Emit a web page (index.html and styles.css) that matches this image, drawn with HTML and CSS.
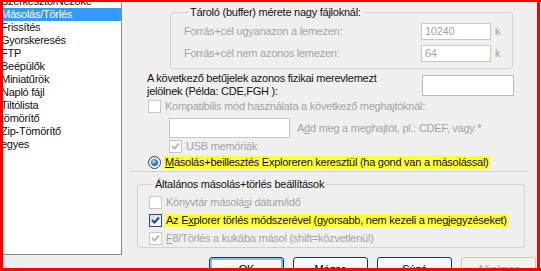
FILE: index.html
```html
<!DOCTYPE html>
<html>
<head>
<meta charset="utf-8">
<link rel="stylesheet" href="styles.css">
</head>
<body>
<div class="frame">
  <div class="list">
    <ul class="items">
      <li>Szerkesztő/Nézőke</li>
      <li class="sel">Másolás/Törlés</li>
      <li>Frissítés</li>
      <li>Gyorskeresés</li>
      <li>FTP</li>
      <li>Beépülők</li>
      <li>Miniatűrök</li>
      <li>Napló fájl</li>
      <li>Tiltólista</li>
      <li>tömörítő</li>
      <li>Zip-Tömörítő</li>
      <li>egyes</li>
    </ul>
  </div>
  <div class="page">
    <fieldset class="grp buf">
      <legend>Tároló (buffer) mérete nagy fájloknál:</legend>
      <div class="bgrid">
        <span class="dis">Forrás+cél ugyanazon a lemezen:</span>
        <span class="inp dis">10240</span>
        <span class="dis unit">k</span>
        <span class="dis">Forrás+cél nem azonos lemezen:</span>
        <span class="inp dis">64</span>
        <span class="dis unit">k</span>
      </div>
    </fieldset>
    <div class="drives">
      <div class="dtext">A következő betűjelek azonos fizikai merevlemezt<br>jelölnek (Példa: CDE,FGH ):</div>
      <div class="inp wide"></div>
    </div>
    <div class="opt compat dis">
      <span class="cb dis"></span>
      <span class="lbl">Kompatibilis mód használata a következő meghajtóknál:</span>
    </div>
    <div class="addrow">
      <span class="inp mid"></span>
      <span class="dis">A<u>d</u>d meg a meghajtót, pl.: CDEF, vagy *</span>
    </div>
    <div class="opt usb dis">
      <span class="cb dis"><svg viewBox="0 0 11 11" width="11" height="11"><polyline points="2,5 4.5,7.5 9,2.5" fill="none" stroke="#b9b9b9" stroke-width="2"/></svg></span>
      <span class="lbl">USB memóriák</span>
    </div>
    <div class="opt radio">
      <span class="rb"><span class="dot"></span></span>
      <span class="lbl hl"><u>M</u>ásolás+beillesztés Exploreren keresztül (ha gond van a másolással)</span>
    </div>
    <div class="sep"></div>
    <fieldset class="grp gen">
      <legend>Általános másolás+törlés beállítások</legend>
      <div class="opt dis">
        <span class="cb dis"></span>
        <span class="lbl">Könyvtár másolá<u>s</u>i dátum/idő</span>
      </div>
      <div class="opt">
        <span class="cb"><svg viewBox="0 0 11 11" width="11" height="11"><polyline points="2,5 4.5,7.5 9,2.5" fill="none" stroke="#2b3f9c" stroke-width="2"/></svg></span>
        <span class="lbl hl">Az E<u>x</u>plorer törlés módszerével (gyorsabb, nem kezeli a megjegyzéseket)</span>
      </div>
      <div class="opt dis">
        <span class="cb dis"><svg viewBox="0 0 11 11" width="11" height="11"><polyline points="2,5 4.5,7.5 9,2.5" fill="none" stroke="#b9b9b9" stroke-width="2"/></svg></span>
        <span class="lbl"><u>F</u>8/Törlés a kukába másol (shift=közvetlenül)</span>
      </div>
    </fieldset>
    <div class="buttons">
      <button class="btn def">OK</button>
      <button class="btn">Mégse</button>
      <button class="btn">Súgó</button>
      <button class="btn dis">Alkalmaz</button>
    </div>
  </div>
</div>
<div class="red red-top"></div>
<div class="red red-left"></div>
<div class="red red-right"></div>
<div class="red red-bottom"></div>
</body>
</html>
```
FILE: styles.css
```css
* { box-sizing: border-box; }
html, body { margin: 0; padding: 0; }
body {
  width: 541px;
  height: 271px;
  overflow: hidden;
  position: relative;
  background: #efefef;
  color: #111;
  font: 11px/13px "Liberation Sans", Arial, sans-serif;
  letter-spacing: -0.25px;
}
.frame { display: flex; height: 271px; }

.list {
  flex: none;
  width: 122px;
  height: 255px;
  background: #fff;
  border-right: 1px solid #8c8c8c;
  border-bottom: 1px solid #8c8c8c;
  overflow: hidden;
}
.items { list-style: none; margin: -5px 0 0; padding: 0; }
.items li { height: 13px; padding-left: 1px; white-space: nowrap; }
.items li.sel { background: #3399ff; color: #fff; }

.page { flex: 1; display: flex; flex-direction: column; min-width: 0; }
.page > * { flex: none; }

.grp {
  margin: 0;
  padding: 0;
  min-width: 0;
  border: 1px solid #d3d3cb;
  border-radius: 3px;
}
.grp legend { padding: 0 2px; margin-left: 4px; line-height: 13px; }

.buf { margin: 6px 0 0 48px; width: 343px; height: 63px; padding: 4px 0 0 13px; }
.bgrid {
  display: grid;
  grid-template-columns: 237px 70px auto;
  grid-auto-rows: 17px;
  row-gap: 5px;
  align-items: center;
}
.unit { margin-left: 4px; }
.dis { color: #a3a3a3; }

.inp {
  display: block;
  background: #fff;
  border: 1px solid #c8c8c0;
  height: 17px;
  line-height: 15px;
  padding: 0 3px;
}
.inp.wide { width: 92px; height: 21px; margin-top: 3px; border-color: #b8b8b8; }
.inp.mid { width: 121px; height: 20px; }

.drives { display: flex; justify-content: space-between; margin: 3px 0 0 25px; width: 367px; }

.opt { display: flex; align-items: center; height: 13px; white-space: nowrap; }
.cb {
  flex: none;
  width: 13px;
  height: 13px;
  border: 1px solid #1c5180;
  background: linear-gradient(135deg, #dcdcd5, #fbfbf9);
  display: flex;
  align-items: center;
  justify-content: center;
}
.cb.dis { border-color: #cac8bb; background: #fff; }
.opt .lbl { margin-left: 3px; padding: 0 1px; }
.hl { background: #ffff33; }

.compat { margin: 2px 0 0 26px; }
.addrow { display: flex; align-items: center; margin: 5px 0 0 47px; height: 20px; }
.addrow .dis { margin-left: 7px; }
.usb { margin: 2px 0 0 47px; }
.radio { margin: 3px 0 0 26px; }
.rb {
  flex: none;
  width: 13px;
  height: 13px;
  border-radius: 50%;
  border: 1px solid #1c5180;
  background: linear-gradient(135deg, #dcdcd5, #fff);
  display: flex;
  align-items: center;
  justify-content: center;
}
.rb .dot {
  width: 7px;
  height: 7px;
  border-radius: 50%;
  background: radial-gradient(circle at 40% 35%, #bfe0ff 0, #3a7fd0 45%, #14407f 100%);
}

.sep { height: 1px; background: #d3d3cb; margin: 2px 0 0 8px; width: 398px; }

.gen { margin: 6px 0 0 15px; width: 388px; height: 70px; padding: 5px 0 0 11px; display: flex; flex-direction: column; gap: 5px; }

.buttons { display: flex; gap: 9px; margin: 9px 0 0 87px; }
.btn {
  flex: none;
  width: 75px;
  height: 23px;
  font: inherit;
  letter-spacing: inherit;
  color: #000;
  background: linear-gradient(#ffffff, #ecebe6 85%, #d6d0c5);
  border: 1px solid #003c74;
  border-radius: 3px;
  padding: 2px 0 0;
  line-height: 13px;
}
.btn.def { box-shadow: inset 0 0 0 2px #8fb8f0; }
.btn.dis { color: #a3a3a3; border-color: #c9c7ba; background: #f5f4ea; }

.red { position: absolute; background: #ff0000; }
.red-top { left: 0; top: 0; width: 541px; height: 2px; }
.red-left { left: 0; top: 0; width: 3px; height: 271px; }
.red-right { left: 537px; top: 0; width: 3px; height: 271px; }
.red-bottom { left: 0; top: 268px; width: 541px; height: 3px; }
```
